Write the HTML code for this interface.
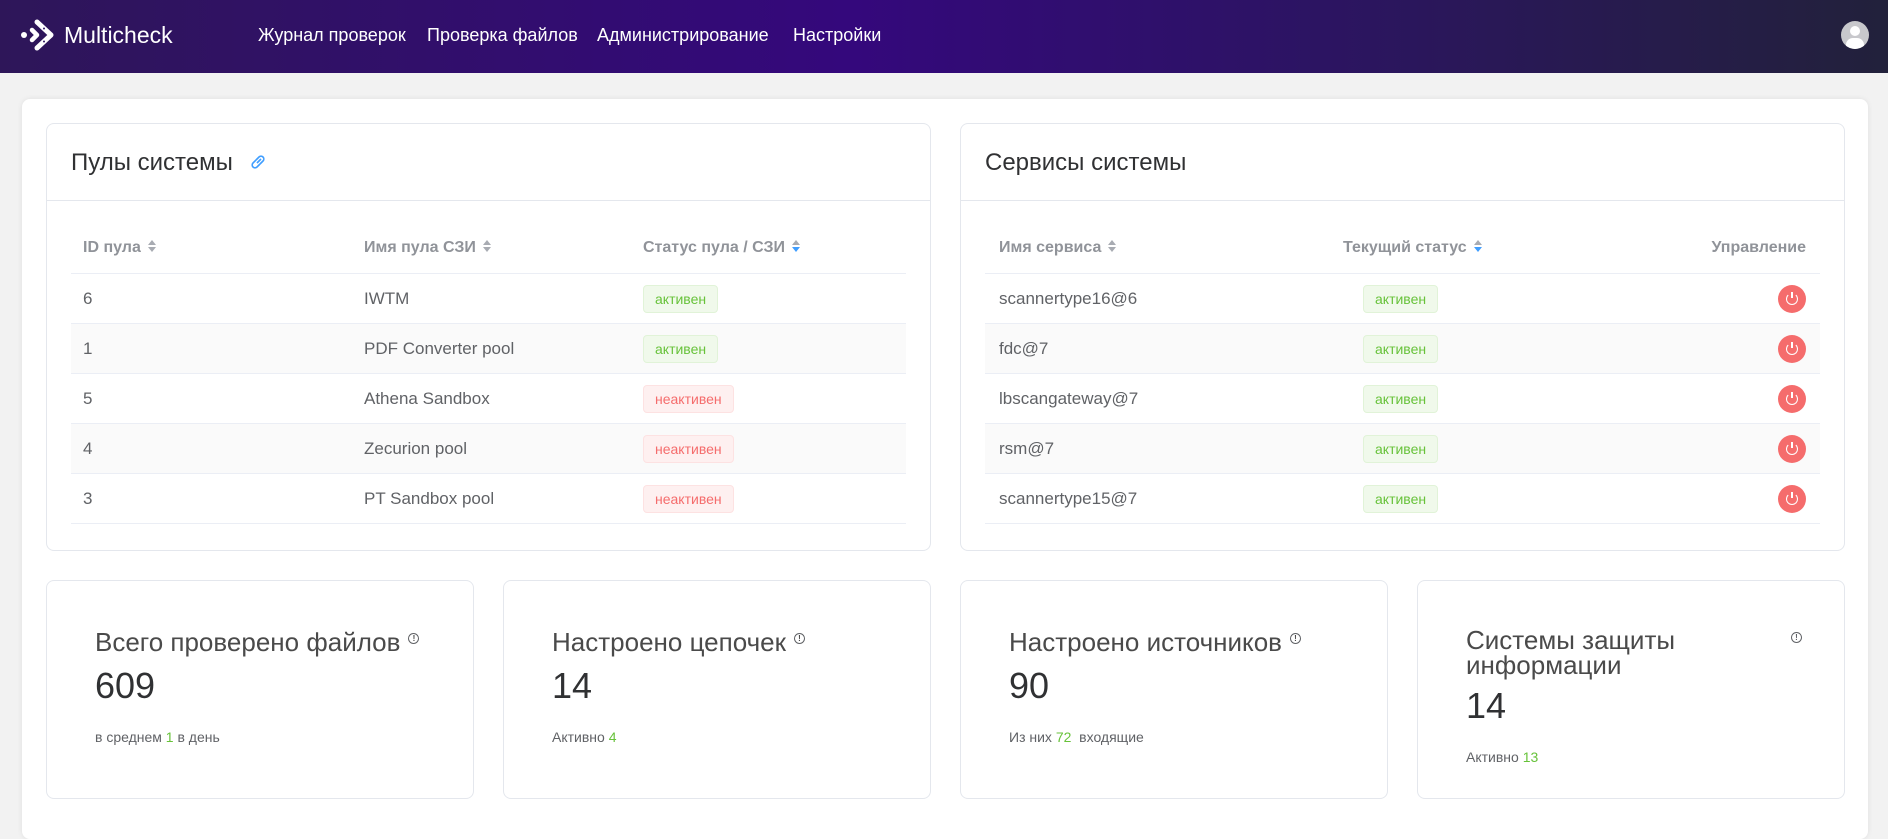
<!DOCTYPE html>
<html><head><meta charset="utf-8"><style>
*{box-sizing:border-box;margin:0;padding:0}
body{width:1888px;height:820px;overflow:hidden;background:#f2f2f2;font-family:"Liberation Sans","DejaVu Sans",sans-serif;color:#606266;position:relative}
.hdr{position:absolute;left:0;top:0;width:1888px;height:73px;background:linear-gradient(90deg,#2e1659 0%,#34087c 45%,#2c1462 70%,#22213b 100%)}
.logo{position:absolute;left:18px;top:16px}
.brand{position:absolute;left:64px;top:22px;color:#fff;font-size:23px}
.nav{position:absolute;top:25px;color:#fff;font-size:18px}
.av{position:absolute;left:1841px;top:21px;width:28px;height:28px;border-radius:50%;background:#c8c8cc;overflow:hidden}
.main{position:absolute;left:22px;top:99px;width:1846px;height:740px;background:#fff;border-radius:8px;box-shadow:0 0 6px rgba(0,0,0,.08)}
.card{position:absolute;background:#fff;border:1px solid #e4e7ed;border-radius:8px}
.ttl{position:absolute;left:24px;top:25px;font-size:24px;color:#303133}
.sep{position:absolute;left:0;right:0;top:76px;border-top:1px solid #e4e7ed}
.row{position:absolute;left:24px;right:24px;height:50px;border-bottom:1px solid #ebeef5;font-size:17px}
.row span{position:absolute;top:15px}
.th{font-weight:bold;color:#909399;font-size:16px}
.b{position:absolute;top:11px;height:28px;padding:0 11px;line-height:26px;font-size:14px;border-radius:4px;border:1px solid}
.g{background:#f0f9eb;border-color:#e1f3d8;color:#67c23a}
.r{background:#fef0f0;border-color:#fde2e2;color:#f56c6c}
.pw{position:absolute;top:11px;width:28px;height:28px;border-radius:50%;background:#f56c6c}
.sort{display:inline-block;vertical-align:middle;margin-left:6px;width:10px;height:14px;position:relative;top:-2px}
.st{position:absolute;font-size:26px;color:#4a4a4a}
.num{position:absolute;font-size:36px;color:#303133}
.sub{position:absolute;font-size:14px;color:#606266}
.gr{color:#67c23a}
.inf{display:inline-block;width:11px;height:11px;border:1.2px solid #606266;border-radius:50%;font-size:8px;line-height:9px;text-align:center;vertical-align:top;margin-left:8px;margin-top:6px;font-weight:bold}
</style></head><body>
<div class="hdr">
<svg class="logo" width="40" height="40" viewBox="0 0 40 40"><g fill="#fff" stroke="#fff" stroke-linecap="round" stroke-linejoin="round"><circle cx="6" cy="19" r="3" stroke="none"/><path d="M19 6 L33 19 L19 32" fill="none" stroke-width="5"/><path d="M14 14 L19 19 L14 24" fill="none" stroke-width="4.5"/></g><g fill="#2f1560"><circle cx="26" cy="12.5" r="1"/><circle cx="26" cy="25.5" r="1"/></g></svg>
<div class="brand">Multicheck</div>
<div class="nav" style="left:258px">Журнал проверок</div>
<div class="nav" style="left:427px">Проверка файлов</div>
<div class="nav" style="left:597px">Администрирование</div>
<div class="nav" style="left:793px">Настройки</div>
<div class="av"><div style="position:absolute;left:9px;top:5px;width:10px;height:10px;border-radius:50%;background:#fff"></div><div style="position:absolute;left:5px;top:17px;width:18px;height:14px;border-radius:7px 7px 0 0;background:#fff"></div></div>
</div>
<div class="main"></div>

<div class="card" style="left:46px;top:123px;width:885px;height:428px">
<div class="ttl">Пулы системы <svg width="20" height="20" viewBox="0 0 20 20" style="margin-left:8px;vertical-align:-2px"><g fill="none" stroke="#409eff" stroke-width="1.6"><path d="M9 11l4-4"/><path d="M8 8L5 11a2.5 2.5 0 0 0 4 4l3-3"/><path d="M12 12l3-3a2.5 2.5 0 0 0-4-4l-3 3"/></g></svg></div>
<div class="sep"></div>
<div class="row th" style="top:100px"><span style="left:12px">ID пула<svg class="sort" viewBox="0 0 10 14"><path d="M5 1l4 5H1z" fill="#a8abb2"/><path d="M5 13l4-5H1z" fill="#a8abb2"/></svg></span><span style="left:293px">Имя пула СЗИ<svg class="sort" viewBox="0 0 10 14"><path d="M5 1l4 5H1z" fill="#a8abb2"/><path d="M5 13l4-5H1z" fill="#a8abb2"/></svg></span><span style="left:572px">Статус пула / СЗИ<svg class="sort" viewBox="0 0 10 14"><path d="M5 1l4 5H1z" fill="#a8abb2"/><path d="M5 13l4-5H1z" fill="#409eff"/></svg></span></div>
<div class="row" style="top:150px"><span style="left:12px">6</span><span style="left:293px">IWTM</span><div class="b g" style="left:572px">активен</div></div>
<div class="row" style="top:200px;background:#fafafa"><span style="left:12px">1</span><span style="left:293px">PDF Converter pool</span><div class="b g" style="left:572px">активен</div></div>
<div class="row" style="top:250px"><span style="left:12px">5</span><span style="left:293px">Athena Sandbox</span><div class="b r" style="left:572px">неактивен</div></div>
<div class="row" style="top:300px;background:#fafafa"><span style="left:12px">4</span><span style="left:293px">Zecurion pool</span><div class="b r" style="left:572px">неактивен</div></div>
<div class="row" style="top:350px"><span style="left:12px">3</span><span style="left:293px">PT Sandbox pool</span><div class="b r" style="left:572px">неактивен</div></div>
</div>

<div class="card" style="left:960px;top:123px;width:885px;height:428px">
<div class="ttl">Сервисы системы</div>
<div class="sep"></div>
<div class="row th" style="top:100px"><span style="left:14px">Имя сервиса<svg class="sort" viewBox="0 0 10 14"><path d="M5 1l4 5H1z" fill="#a8abb2"/><path d="M5 13l4-5H1z" fill="#a8abb2"/></svg></span><span style="left:358px">Текущий статус<svg class="sort" viewBox="0 0 10 14"><path d="M5 1l4 5H1z" fill="#a8abb2"/><path d="M5 13l4-5H1z" fill="#409eff"/></svg></span><span style="right:14px">Управление</span></div>
<div class="row" style="top:150px"><span style="left:14px">scannertype16@6</span><div class="b g" style="left:378px">активен</div><div class="pw" style="right:14px"></div></div>
<div class="row" style="top:200px;background:#fafafa"><span style="left:14px">fdc@7</span><div class="b g" style="left:378px">активен</div><div class="pw" style="right:14px"></div></div>
<div class="row" style="top:250px"><span style="left:14px">lbscangateway@7</span><div class="b g" style="left:378px">активен</div><div class="pw" style="right:14px"></div></div>
<div class="row" style="top:300px;background:#fafafa"><span style="left:14px">rsm@7</span><div class="b g" style="left:378px">активен</div><div class="pw" style="right:14px"></div></div>
<div class="row" style="top:350px"><span style="left:14px">scannertype15@7</span><div class="b g" style="left:378px">активен</div><div class="pw" style="right:14px"></div></div>
</div>

<div class="card" style="left:46px;top:580px;width:428px;height:219px">
<div class="st" style="left:48px;top:46px">Всего проверено файлов<span class="inf">!</span></div>
<div class="num" style="left:48px;top:84px">609</div>
<div class="sub" style="left:48px;top:148px">в среднем <span class="gr">1</span> в день</div>
</div>
<div class="card" style="left:503px;top:580px;width:428px;height:219px">
<div class="st" style="left:48px;top:46px">Настроено цепочек<span class="inf">!</span></div>
<div class="num" style="left:48px;top:84px">14</div>
<div class="sub" style="left:48px;top:148px">Активно <span class="gr">4</span></div>
</div>
<div class="card" style="left:960px;top:580px;width:428px;height:219px">
<div class="st" style="left:48px;top:46px">Настроено источников<span class="inf">!</span></div>
<div class="num" style="left:48px;top:84px">90</div>
<div class="sub" style="left:48px;top:148px">Из них <span class="gr">72</span>&nbsp; входящие</div>
</div>
<div class="card" style="left:1417px;top:580px;width:428px;height:219px">
<div class="st" style="left:48px;top:47px;line-height:25px">Системы защиты<br>информации</div>
<span class="inf" style="position:absolute;left:365px;top:45px">!</span>
<div class="num" style="left:48px;top:104px">14</div>
<div class="sub" style="left:48px;top:168px">Активно <span class="gr">13</span></div>
</div>
<style>.pw::after{content:"";position:absolute;left:8px;top:8px;width:12px;height:12px;border:1.5px solid #fff;border-top-color:transparent;border-radius:50%;box-sizing:border-box}.pw::before{content:"";position:absolute;left:13.3px;top:7px;width:1.5px;height:6px;background:#fff}</style>
</body></html>
